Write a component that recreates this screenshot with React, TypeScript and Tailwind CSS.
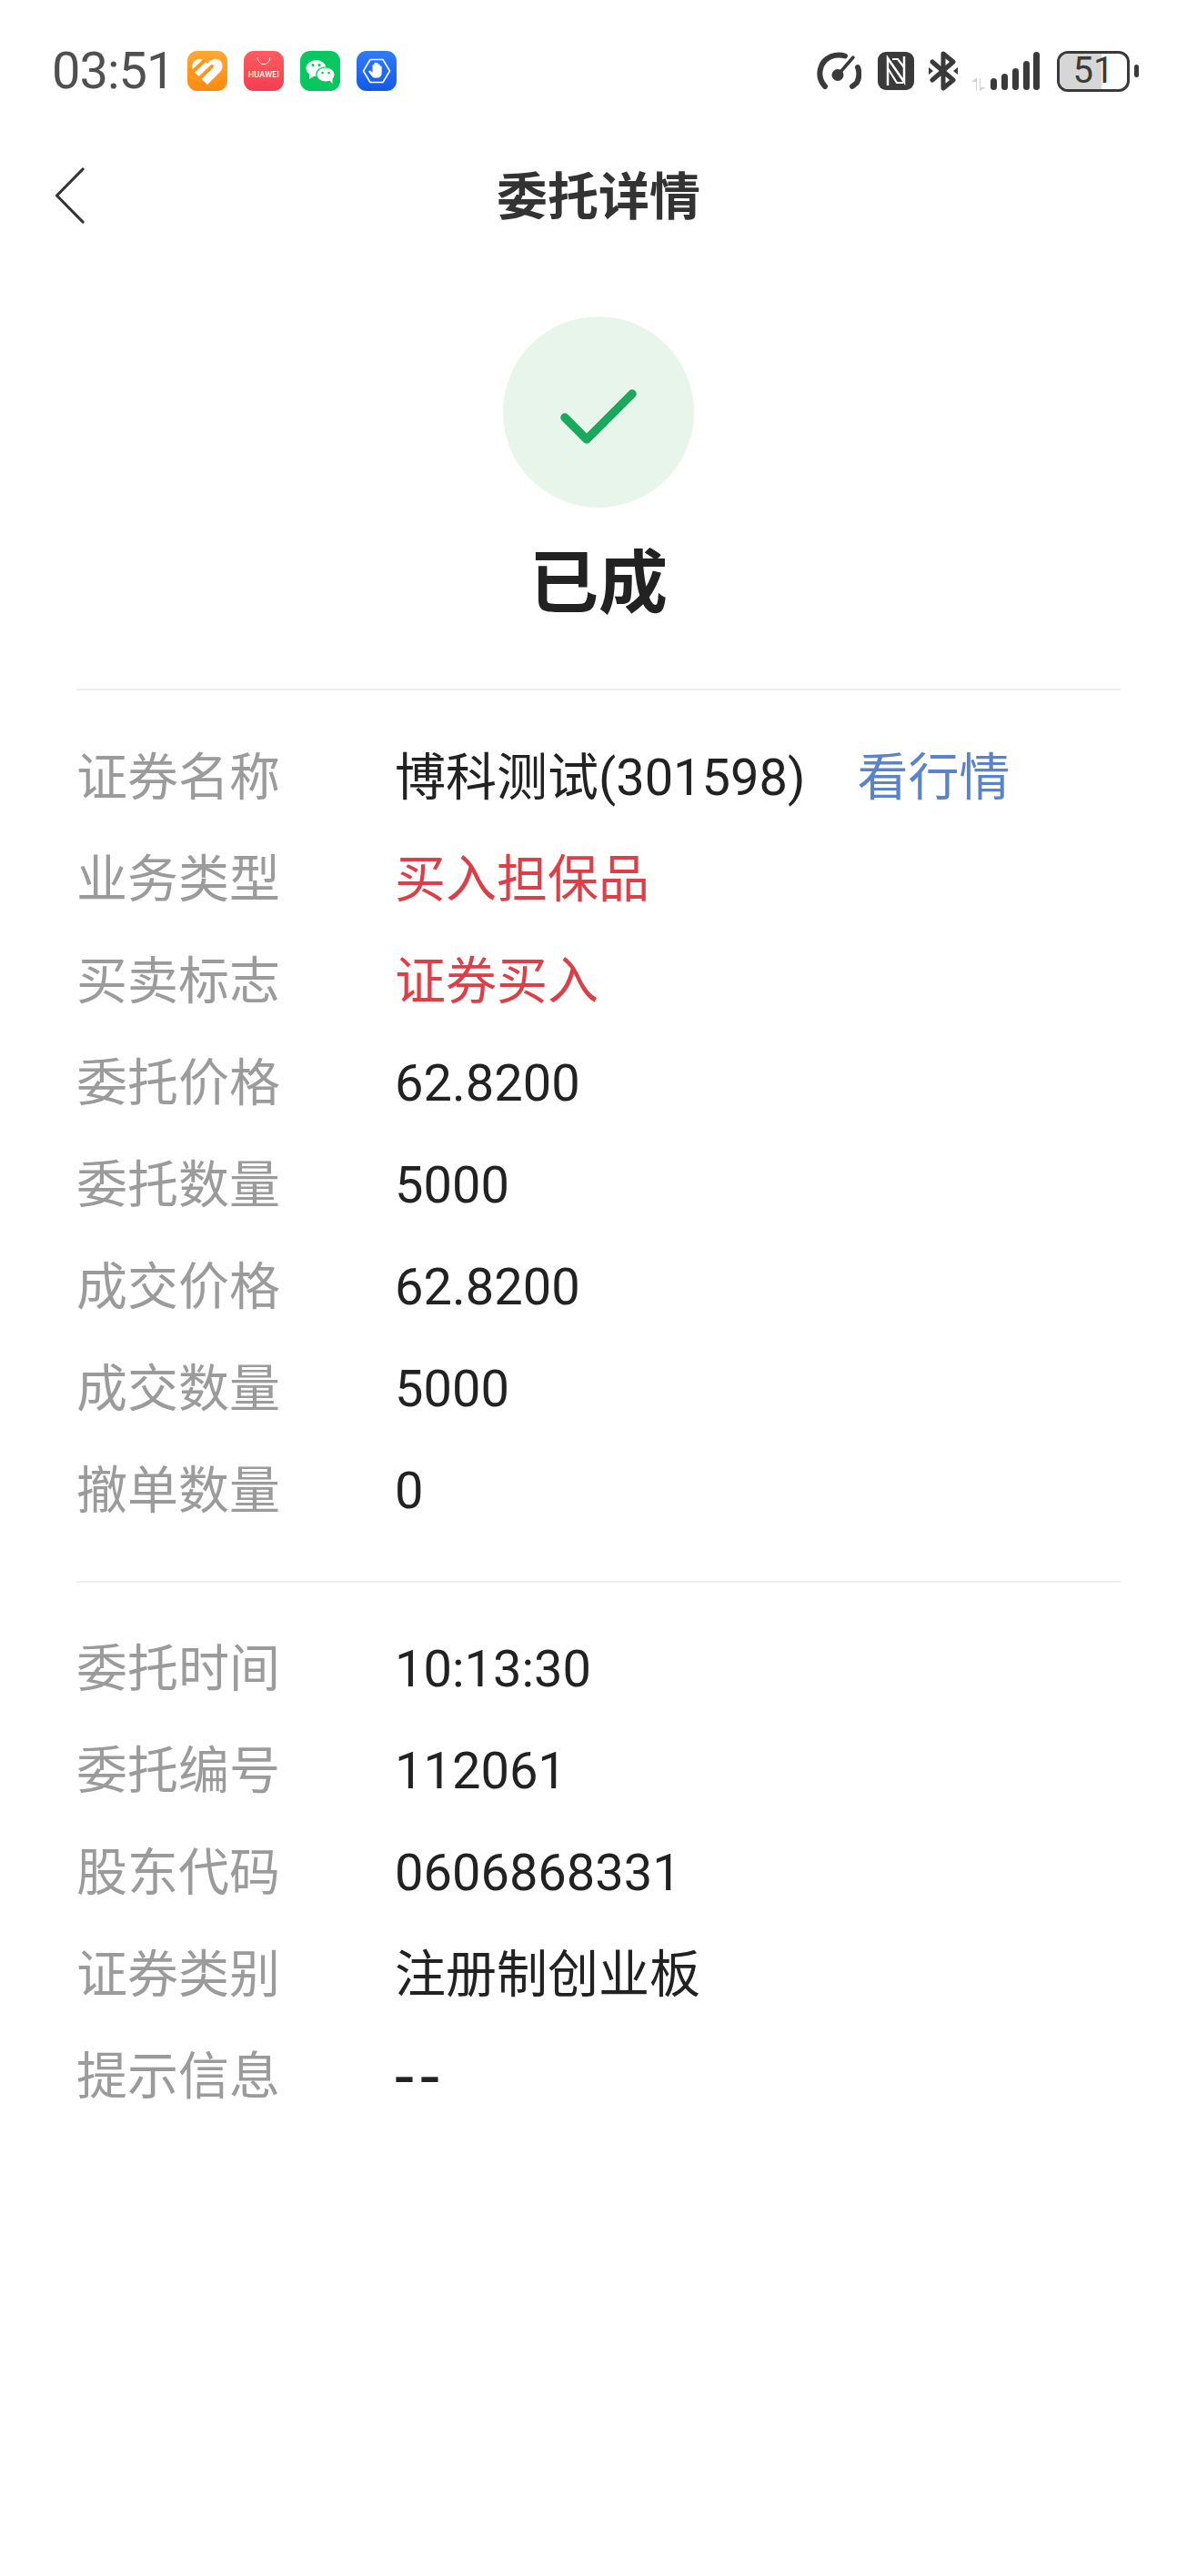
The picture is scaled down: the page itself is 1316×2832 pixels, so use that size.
const fontStack = "font-['Roboto','Noto_Sans_CJK_SC',sans-serif]";

function HealthIcon() {
  return (
    <div className="h-[44px] w-[44px] rounded-[11px] bg-gradient-to-b from-[#ffa733] to-[#ff8a0a]">
      <svg viewBox="0 0 44 44" className="h-[44px] w-[44px]">
        <path d="M22 37 L7.500 23 C3.500 18.500 5 10.500 11.500 9 C15 8.200 17.500 9.500 20 12 L22 14 L24.500 11.500 C28.500 8 33.500 8 36.500 11 C39.500 14.500 39 19.500 36.500 22.500 Z" fill="#fff" />
        <path d="M4 24.500 L18.500 11 M12.500 31 L27 17" stroke="#ff9416" strokeWidth="4" fill="none" strokeLinecap="round" />
      </svg>
    </div>
  );
}

function HuaweiIcon() {
  return (
    <div className="flex h-[44px] w-[44px] flex-col items-center rounded-[11px] bg-gradient-to-b from-[#ff5c60] to-[#f53c50]">
      <svg viewBox="0 0 44 19" className="h-[19px] w-[44px] shrink-0">
        <path d="M15 7 C16 17 28 17 29 7" stroke="#fff" strokeWidth="1" fill="none" />
      </svg>
      <span className="mt-[2px] font-['Roboto',sans-serif] text-[9px] leading-[10px] font-medium tracking-[0.2px] text-[#fff0f0]">
        HUAWEI
      </span>
    </div>
  );
}

function WechatIcon() {
  return (
    <div className="h-[44px] w-[44px] rounded-[11px] bg-[#07c860]">
      <svg viewBox="0 0 44 44" className="h-[44px] w-[44px]">
        <ellipse cx="17.500" cy="19" rx="11" ry="9" fill="#fff" />
        <path d="M10.500 24 L10 31 L16.500 27 Z" fill="#fff" />
        <ellipse cx="28" cy="26" rx="10.200" ry="8.200" fill="#fff" stroke="#07c860" strokeWidth="1.200" />
        <path d="M32 32 L35.500 36 L35.500 30 Z" fill="#fff" />
        <circle cx="14" cy="15.500" r="1.600" fill="#07c860" />
        <circle cx="21" cy="15.500" r="1.600" fill="#07c860" />
        <circle cx="24.500" cy="24" r="1.300" fill="#07c860" />
        <circle cx="31.500" cy="24" r="1.300" fill="#07c860" />
      </svg>
    </div>
  );
}

function GuardIcon() {
  return (
    <div className="h-[44px] w-[44px] rounded-[11px] bg-gradient-to-b from-[#2f7bf5] to-[#1259ec]">
      <svg viewBox="0 0 44 44" className="h-[44px] w-[44px]">
        <path d="M7.500 22 L15 9.500 H29 L36.500 22 L29 34.500 H15 Z" fill="none" stroke="#fff" strokeWidth="1.600" strokeLinejoin="round" />
        <path d="M18 29 L13.500 23.500 C12.800 22 14.500 21 15.500 22 L17.500 24 V16 C17.500 14.500 19.400 14.500 19.500 16 V13.800 C19.500 12.400 21.500 12.400 21.600 13.800 V14 C21.600 12.800 23.700 12.800 23.700 14.200 V15.500 C23.700 14.200 25.700 14.200 25.700 15.800 V17.500 C25.700 16.200 27.700 16.200 27.700 17.800 V24 C27.700 27 26 29.500 23 29.500 C21 29.500 19.200 29.700 18 29 Z" fill="#fff" />
      </svg>
    </div>
  );
}

function SpeedIcon() {
  return (
    <svg viewBox="0 0 49 44" className="h-[44px] w-[49px]">
      <path d="M9 39 C-1 28 3 11 16 6 C21 4 26 4 31 5.500" fill="none" stroke="#3a3a3a" strokeWidth="6" strokeLinecap="round" />
      <path d="M39 39 L44 35 C47 29 47 23 45 18" fill="none" stroke="#3a3a3a" strokeWidth="6" strokeLinecap="round" strokeLinejoin="round" />
      <path d="M40 7 L27 22" stroke="#3a3a3a" strokeWidth="3.500" strokeLinecap="round" />
      <circle cx="23" cy="26.500" r="6.500" fill="#3a3a3a" />
    </svg>
  );
}

function NfcIcon() {
  return (
    <svg viewBox="0 0 40 42" className="h-[42px] w-[40px]">
      <rect width="40" height="42" rx="9" fill="#3a3a3a" />
      <path d="M11 37 V7 L29 33 V5" fill="none" stroke="#fff" strokeWidth="2.500" />
      <path d="M16 8 H22 L29 17 M11 18 L21 34 H28" fill="none" stroke="#fff" strokeWidth="2.200" />
    </svg>
  );
}

function BluetoothIcon() {
  return (
    <svg viewBox="0 0 32 44" className="h-[44px] w-[32px]">
      <path d="M4 12 L27 32 L16 41 V3 L27 12 L4 32" fill="none" stroke="#3a3a3a" strokeWidth="5" strokeLinejoin="round" strokeLinecap="round" />
      <path d="M0 18 L5 22 L0 26 Z M32 18 L27 22 L32 26 Z" fill="#3a3a3a" />
    </svg>
  );
}

function SignalIcon() {
  const bars = [
    { x: 22, h: 13 },
    { x: 34, h: 18 },
    { x: 46, h: 24 },
    { x: 58, h: 32 },
    { x: 69, h: 42 },
  ];
  return (
    <svg viewBox="0 0 76 44" className="h-[44px] w-[76px]">
      <path d="M6 44 V34 H1 L7 29 V44 Z M11 30 V40 H17 L10 44 V30 Z" fill="#d4d4d4" />
      {bars.map((b) => (
        <rect key={b.x} x={b.x} y={43 - b.h} width="7" height={b.h} rx="3.500" fill="#3a3a3a" />
      ))}
    </svg>
  );
}

function Battery() {
  return (
    <div className="flex items-center gap-[5px]">
      <div className="relative h-[45px] w-[80px] overflow-hidden rounded-[12px] border-[3px] border-[#3a3a3a] bg-white">
        <div className="h-full w-[46px] bg-[#d6d6d6]" />
        <span className="absolute inset-0 flex items-center justify-center font-['Roboto',sans-serif] text-[40px] text-[#3a3a3a]">
          51
        </span>
      </div>
      <div className="h-[14px] w-[5px] rounded-full bg-[#3a3a3a]" />
    </div>
  );
}

const firstGroup = [
  { label: "业务类型", value: "买入担保品", red: true },
  { label: "买卖标志", value: "证券买入", red: true },
  { label: "委托价格", value: "62.8200" },
  { label: "委托数量", value: "5000" },
  { label: "成交价格", value: "62.8200" },
  { label: "成交数量", value: "5000" },
  { label: "撤单数量", value: "0" },
];

const secondGroup = [
  { label: "委托时间", value: "10:13:30" },
  { label: "委托编号", value: "112061" },
  { label: "股东代码", value: "0606868331" },
  { label: "证券类别", value: "注册制创业板" },
];

function Row({ label, value, red, children }: { label: string; value?: string; red?: boolean; children?: React.ReactNode }) {
  return (
    <div className="flex h-[112px] items-center text-[56px]">
      <span className="w-[350px] text-[#9b9b9b]">{label}</span>
      {value && <span className={red ? "text-[#dd3f48]" : "text-[#222222]"}>{value}</span>}
      {children}
    </div>
  );
}

export default function App() {
  return (
    <div className={`min-h-[2832px] bg-white ${fontStack}`}>
      <div className="flex h-[156px] items-center pl-[57px] pr-[64px]">
        <span className="w-[135px] text-[56px] tracking-[-1px] text-[#505050]">03:51</span>
        <div className="ml-[14px] flex gap-[18px]">
          <HealthIcon />
          <HuaweiIcon />
          <WechatIcon />
          <GuardIcon />
        </div>
        <div className="ml-auto flex items-center">
          <SpeedIcon />
          <div className="ml-[18px]">
            <NfcIcon />
          </div>
          <div className="ml-[16px]">
            <BluetoothIcon />
          </div>
          <div className="ml-[14px]">
            <SignalIcon />
          </div>
          <div className="ml-[19px]">
            <Battery />
          </div>
        </div>
      </div>

      <div className="relative flex h-[122px] items-center justify-center">
        <svg viewBox="0 0 34 62" className="absolute top-[28px] left-[60px] h-[62px] w-[34px]">
          <path d="M31 2 L2.500 31 L31 60" fill="none" stroke="#333333" strokeWidth="3.200" strokeLinecap="round" strokeLinejoin="round" />
        </svg>
        <h1 className="text-[56px] font-bold text-[#333333]">委托详情</h1>
      </div>

      <div className="mt-[70px] flex flex-col items-center">
        <div className="flex h-[210px] w-[210px] items-center justify-center rounded-full bg-[#e7f5ea]">
          <svg viewBox="0 0 84 60" className="mr-[1px] mt-[10px] h-[60px] w-[84px]">
            <path d="M5 31 L29 55 L79 5" fill="none" stroke="#1aa85c" strokeWidth="9.500" strokeLinecap="round" strokeLinejoin="round" />
          </svg>
        </div>
        <div className="mt-[39px] text-[76px] leading-[90px] font-bold text-[#222222]">已成</div>
      </div>

      <div className="mx-[84px] mt-[70px] border-t-2 border-[#eeeeee] pt-[40px]">
        <Row label="证券名称" value="博科测试(301598)">
          <span className="ml-[57px] text-[#5b84c8]">看行情</span>
        </Row>
        {firstGroup.map((r) => (
          <Row key={r.label} {...r} />
        ))}
      </div>

      <div className="mx-[84px] mt-[43px] border-t-2 border-[#eeeeee] pt-[39px]">
        {secondGroup.map((r) => (
          <Row key={r.label} {...r} />
        ))}
        <Row label="提示信息">
          <span className="text-[76px] tracking-[7px] text-[#222222]">--</span>
        </Row>
      </div>
    </div>
  );
}
